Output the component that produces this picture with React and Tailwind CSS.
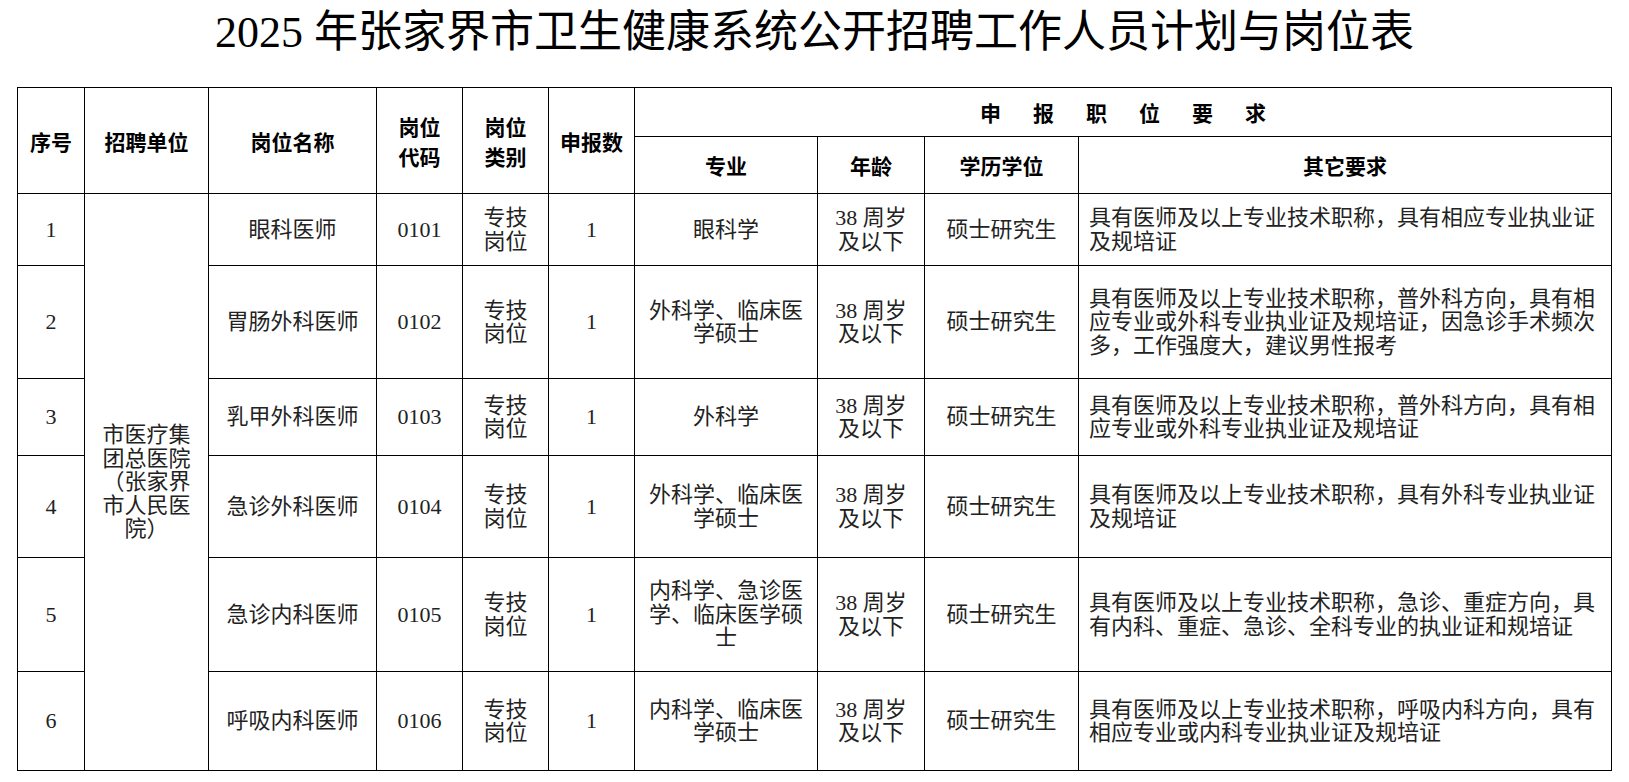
import React from 'react';

const rows = [
  {
    no: '1',
    name: '眼科医师',
    code: '0101',
    major: ['眼科学'],
    other: ['具有医师及以上专业技术职称，具有相应专业执业证', '及规培证'],
    h: 'h-[72px]',
  },
  {
    no: '2',
    name: '胃肠外科医师',
    code: '0102',
    major: ['外科学、临床医', '学硕士'],
    other: [
      '具有医师及以上专业技术职称，普外科方向，具有相',
      '应专业或外科专业执业证及规培证，因急诊手术频次',
      '多，工作强度大，建议男性报考',
    ],
    h: 'h-[113px]',
  },
  {
    no: '3',
    name: '乳甲外科医师',
    code: '0103',
    major: ['外科学'],
    other: ['具有医师及以上专业技术职称，普外科方向，具有相', '应专业或外科专业执业证及规培证'],
    h: 'h-[77px]',
  },
  {
    no: '4',
    name: '急诊外科医师',
    code: '0104',
    major: ['外科学、临床医', '学硕士'],
    other: ['具有医师及以上专业技术职称，具有外科专业执业证', '及规培证'],
    h: 'h-[102px]',
  },
  {
    no: '5',
    name: '急诊内科医师',
    code: '0105',
    major: ['内科学、急诊医', '学、临床医学硕', '士'],
    other: ['具有医师及以上专业技术职称，急诊、重症方向，具', '有内科、重症、急诊、全科专业的执业证和规培证'],
    h: 'h-[114px]',
  },
  {
    no: '6',
    name: '呼吸内科医师',
    code: '0106',
    major: ['内科学、临床医', '学硕士'],
    other: ['具有医师及以上专业技术职称，呼吸内科方向，具有', '相应专业或内科专业执业证及规培证'],
    h: 'h-[99px]',
  },
];

const th = 'border border-black text-center align-middle p-0';
const td = 'border border-black text-center align-middle p-0';

function Lines({ items }) {
  return items.map((t, i) => (
    <span key={i} className="block whitespace-nowrap">
      {t}
    </span>
  ));
}

export default function App() {
  return (
    <div className="w-[1629px] h-[782px] bg-white overflow-hidden">
      <h1 className="pt-[12px] text-center text-[44px] leading-[42px] font-normal text-black font-['Liberation_Serif','Noto_Sans_CJK_SC',serif]">
        2025 年张家界市卫生健康系统公开招聘工作人员计划与岗位表
      </h1>

      <table className="mt-[33px] ml-[17px] w-[1594px] table-fixed border-collapse">
        <colgroup>
          <col className="w-[67px]" />
          <col className="w-[124px]" />
          <col className="w-[168px]" />
          <col className="w-[86px]" />
          <col className="w-[86px]" />
          <col className="w-[86px]" />
          <col className="w-[183px]" />
          <col className="w-[107px]" />
          <col className="w-[154px]" />
          <col className="w-[533px]" />
        </colgroup>
        <thead className="font-['Noto_Sans_CJK_SC',sans-serif] font-bold text-[21px] leading-[30px] text-black">
          <tr className="h-[49px]">
            <th rowSpan={2} className={th}>序号</th>
            <th rowSpan={2} className={th}>招聘单位</th>
            <th rowSpan={2} className={th}>岗位名称</th>
            <th rowSpan={2} className={th}>
              <Lines items={['岗位', '代码']} />
            </th>
            <th rowSpan={2} className={th}>
              <Lines items={['岗位', '类别']} />
            </th>
            <th rowSpan={2} className={th}>申报数</th>
            <th colSpan={4} className={th}>
              <div className="flex justify-center gap-[32px]">
                <span>申</span>
                <span>报</span>
                <span>职</span>
                <span>位</span>
                <span>要</span>
                <span>求</span>
              </div>
            </th>
          </tr>
          <tr className="h-[57px]">
            <th className={th}>专业</th>
            <th className={th}>年龄</th>
            <th className={th}>学历学位</th>
            <th className={th}>其它要求</th>
          </tr>
        </thead>
        <tbody className="font-['Liberation_Serif','Noto_Sans_CJK_SC',serif] text-[22px] leading-[23.5px] text-[#222]">
          {rows.map((r, i) => (
            <tr key={r.no} className={r.h}>
              <td className={td}>{r.no}</td>
              {i === 0 && (
                <td rowSpan={6} className={td}>
                  <Lines items={['市医疗集', '团总医院', '（张家界', '市人民医', '院）']} />
                </td>
              )}
              <td className={td}>{r.name}</td>
              <td className={td}>{r.code}</td>
              <td className={td}>
                <Lines items={['专技', '岗位']} />
              </td>
              <td className={td}>1</td>
              <td className={td}>
                <Lines items={r.major} />
              </td>
              <td className={td}>
                <Lines items={['38 周岁', '及以下']} />
              </td>
              <td className={td}>硕士研究生</td>
              <td className="border border-black text-left align-middle px-[10px] py-0">
                <Lines items={r.other} />
              </td>
            </tr>
          ))}
        </tbody>
      </table>
    </div>
  );
}
